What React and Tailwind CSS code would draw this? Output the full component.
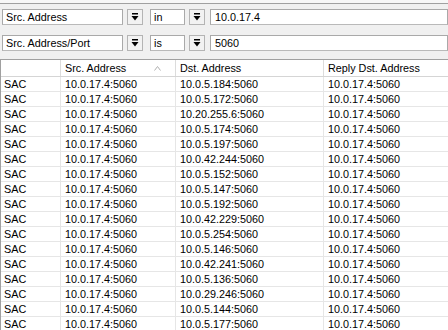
import React from "react";

const rows = [
  "10.0.5.184:5060",
  "10.0.5.172:5060",
  "10.20.255.6:5060",
  "10.0.5.174:5060",
  "10.0.5.197:5060",
  "10.0.42.244:5060",
  "10.0.5.152:5060",
  "10.0.5.147:5060",
  "10.0.5.192:5060",
  "10.0.42.229:5060",
  "10.0.5.254:5060",
  "10.0.5.146:5060",
  "10.0.42.241:5060",
  "10.0.5.136:5060",
  "10.0.29.246:5060",
  "10.0.5.144:5060",
  "10.0.5.177:5060",
];

function DropButton() {
  return (
    <div className="w-[16px] h-[16px] shrink-0 bg-[#f2f2f2] border border-[#b4b4b4] flex items-center justify-center">
      <svg width="8" height="8" viewBox="0 0 8 8">
        <rect x="1" y="0" width="6" height="1.5" fill="#000" />
        <polygon points="0.5,3 7.5,3 4,7.5" fill="#000" />
      </svg>
    </div>
  );
}

function Field({ className, children }) {
  return (
    <div
      className={
        "h-[16px] bg-white border border-[#a9a9a9] border-b-[#b9b9b9] flex items-center pl-[3px] leading-none " +
        className
      }
    >
      {children}
    </div>
  );
}

function FilterRow({ field, op, value }) {
  return (
    <div className="flex items-center h-[16px]">
      <Field className="w-[121px]">{field}</Field>
      <div className="ml-[4px]">
        <DropButton />
      </div>
      <Field className="w-[35px] ml-[7px]">{op}</Field>
      <div className="ml-[4px]">
        <DropButton />
      </div>
      <Field className="flex-1 ml-[5px] pl-[4px]">{value}</Field>
    </div>
  );
}

export default function App() {
  return (
    <div
      className="w-[448px] h-[330px] overflow-hidden bg-[#f0f0f0] text-[10.8px] text-black"
      style={{ fontFamily: '"Liberation Sans", Arial, sans-serif' }}
    >
      <div className="h-[3px] bg-[#f7f7f7]" />
      <div className="h-[1px] bg-[#a0a0a0]" />
      <div className="pl-[2px] pt-[5px] flex flex-col gap-[10px]">
        <FilterRow field="Src. Address" op="in" value="10.0.17.4" />
        <FilterRow field="Src. Address/Port" op="is" value="5060" />
      </div>
      <div className="mt-[8px] bg-white border-t border-l border-[#a0a0a0]">
        <div className="grid grid-cols-[60px_115px_148px_1fr] h-[17px] border-b border-[#d5d5d5]">
          <div className="border-r border-[#dcdcdc]" />
          <div className="border-r border-[#dcdcdc] pl-[4px] flex items-center justify-between pr-[14px]">
            <span>Src. Address</span>
            <svg width="7" height="5" viewBox="0 0 7 5">
              <polyline points="0.5,4.5 3.5,0.5 6.5,4.5" fill="none" stroke="#b0b0b0" strokeWidth="1" />
            </svg>
          </div>
          <div className="border-r border-[#dcdcdc] pl-[4px] flex items-center">Dst. Address</div>
          <div className="pl-[4px] flex items-center">Reply Dst. Address</div>
        </div>
        {rows.map((dst, i) => (
          <div
            key={i}
            className="grid grid-cols-[60px_115px_148px_1fr] h-[15px] border-b border-[#e6e6e6] leading-[14px]"
          >
            <div className="border-r border-[#e6e6e6] pl-[3px]">SAC</div>
            <div className="border-r border-[#e6e6e6] pl-[4px]">10.0.17.4:5060</div>
            <div className="border-r border-[#e6e6e6] pl-[4px]">{dst}</div>
            <div className="pl-[4px]">10.0.17.4:5060</div>
          </div>
        ))}
      </div>
    </div>
  );
}
